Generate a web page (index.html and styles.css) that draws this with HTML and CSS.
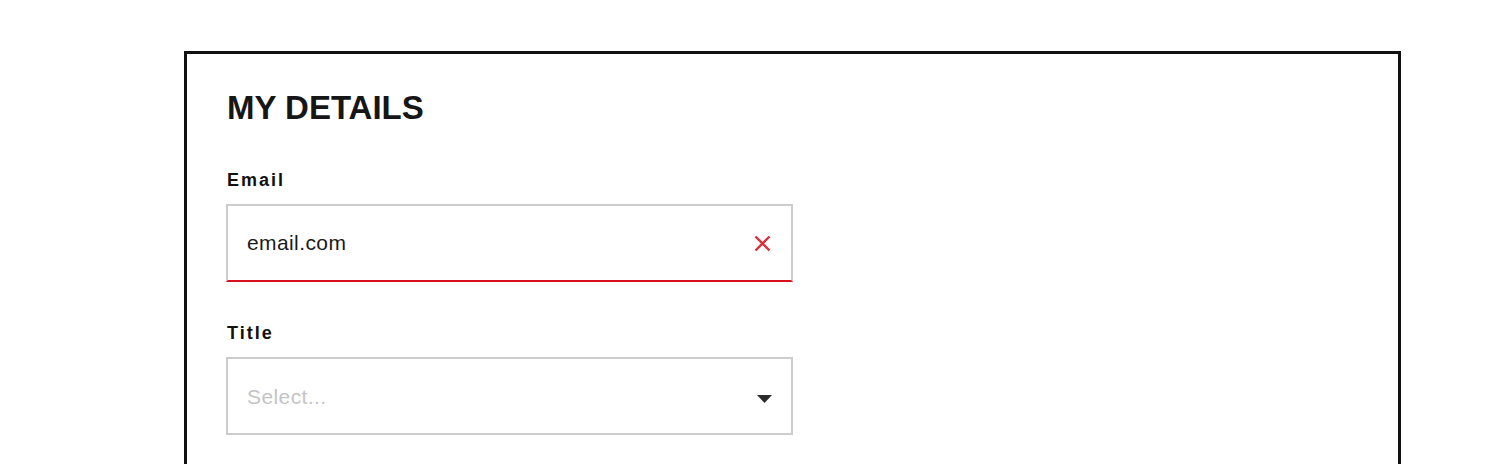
FILE: index.html
```html
<!DOCTYPE html>
<html lang="en">
<head>
    <meta charset="UTF-8">
    <meta name="viewport" content="width=device-width, initial-scale=1.0">
    <title>My details</title>
    <link rel="stylesheet" href="styles.css">
</head>
<body>
    <div class="page">
        <div class="card">
            <h1>MY DETAILS</h1>

            <div class="form-group">
                <label for="email">Email</label>
                <div class="field field-error">
                    <input type="text" id="email" value="email.com">
                    <svg class="icon-clear" width="17" height="17" viewBox="0 0 17 17" aria-hidden="true">
                        <path d="M1.5 1.5 L15.5 15.5 M15.5 1.5 L1.5 15.5" stroke="#d8303c" stroke-width="2.4" fill="none"/>
                    </svg>
                </div>
            </div>

            <div class="form-group">
                <label for="title">Title</label>
                <div class="field">
                    <select id="title" class="placeholder">
                        <option value="" selected>Select...</option>
                        <option>Mr</option>
                        <option>Mrs</option>
                        <option>Ms</option>
                        <option>Miss</option>
                    </select>
                    <svg class="icon-caret" width="15" height="8" viewBox="0 0 15 8" aria-hidden="true">
                        <path d="M0 0 H15 L7.5 8 Z" fill="#2b2b2b"/>
                    </svg>
                </div>
            </div>
        </div>
    </div>
</body>
</html>
```

FILE: styles.css
```css
body {
    font-family: 'Liberation Sans', Arial, sans-serif;
    background-color: #ffffff;
    color: #111111;
    margin: 0;
    padding: 0;
}

.page {
    padding: 51px 0 0 184px;
}

.card {
    width: 1217px;
    box-sizing: border-box;
    border: 3px solid #111111;
    padding: 34px 40px 40px 40px;
    min-height: 500px;
}

h1 {
    margin: 0 0 40px 0;
    font-size: 33px;
    line-height: 40px;
    font-weight: bold;
    color: #161616;
}

.form-group {
    width: 566px;
    margin-bottom: 39px;
}

label {
    display: block;
    font-size: 18px;
    line-height: 24px;
    font-weight: bold;
    letter-spacing: 2px;
    margin-bottom: 12px;
}

.field {
    display: flex;
    align-items: center;
    height: 78px;
    box-sizing: border-box;
    margin-left: -1px;
    border: 2px solid #cccccc;
    padding: 0 19px 0 19px;
    background-color: #ffffff;
}

.form-group + .form-group .field {
    margin-top: 1px;
}

.field-error {
    border-bottom-color: #d8101e;
    padding-right: 20px;
}

.field input,
.field select {
    flex: 1;
    min-width: 0;
    border: none;
    outline: none;
    background: transparent;
    padding: 0;
    margin: 0;
    font-family: 'Liberation Sans', Arial, sans-serif;
    font-size: 21px;
    letter-spacing: 0.4px;
    color: #1a1a1a;
}

.field select {
    -webkit-appearance: none;
    appearance: none;
    height: 100%;
    cursor: pointer;
}

.field select.placeholder {
    color: #c4c4c4;
}

.icon-clear {
    flex: none;
    cursor: pointer;
}

.icon-caret {
    flex: none;
    margin-top: 5px;
}
```
